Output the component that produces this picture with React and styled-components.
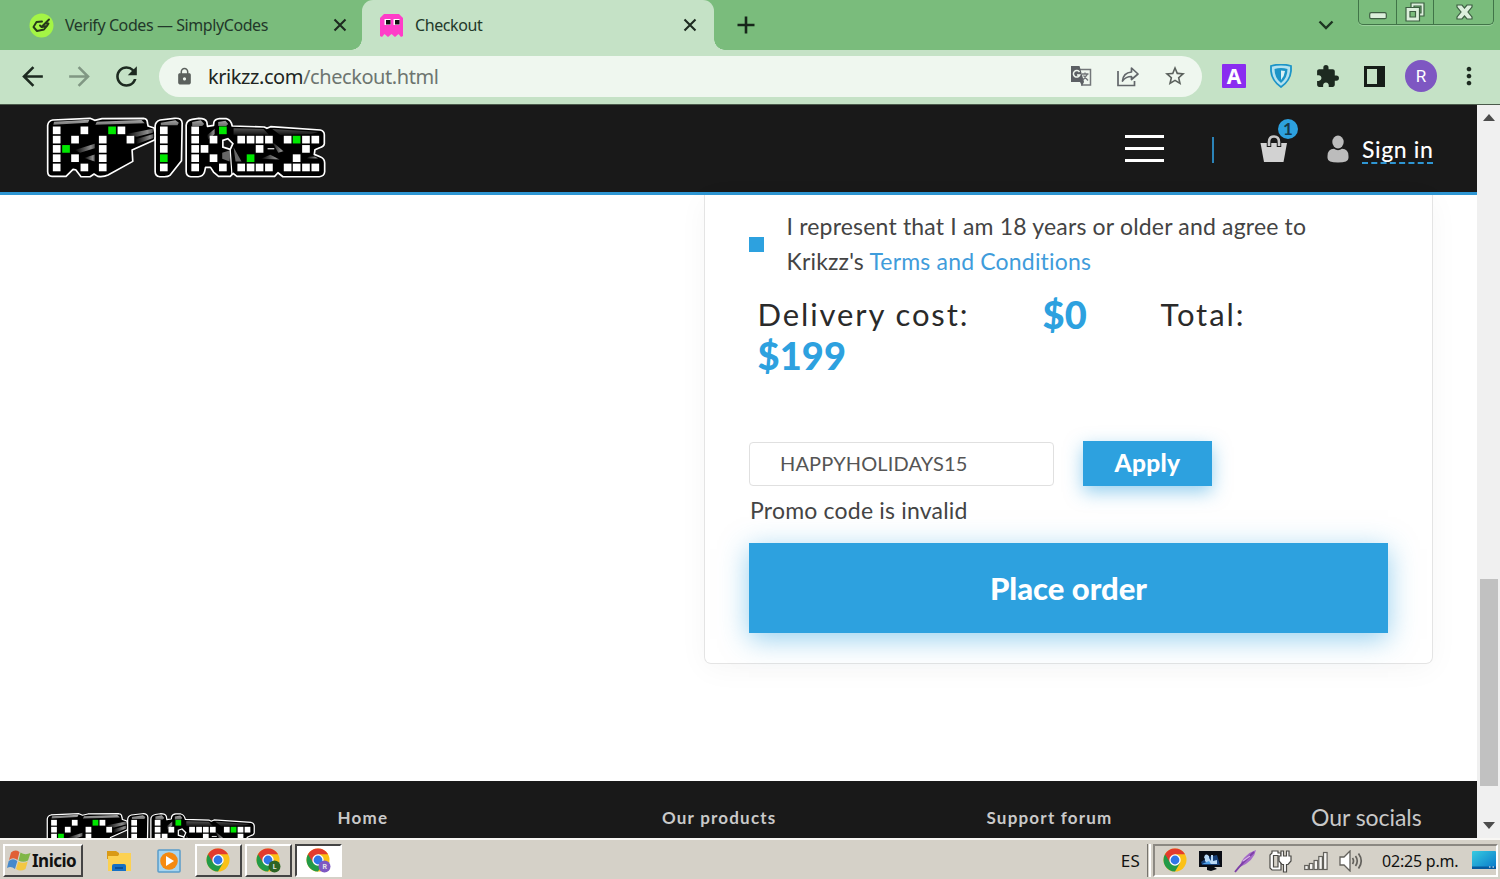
import styled, { createGlobalStyle, css } from "styled-components";
import {
  MdArrowBack,
  MdArrowForward,
  MdRefresh,
  MdLock,
  MdStarBorder,
  MdExtension,
  MdMoreVert,
} from "react-icons/md";

const GlobalStyle = createGlobalStyle`
  * {
    box-sizing: border-box;
  }

  body {
    margin: 0;
    overflow: hidden;
    background: #fff;
    font-family: Lato, sans-serif;
  }

  svg {
    display: block;
    flex: none;
  }
`;

const Screen = styled.div`
  width: 1500px;
  height: 879px;
  display: flex;
  flex-direction: column;
  overflow: hidden;
`;

/* ---------- browser ---------- */

const TabStrip = styled.div`
  height: 50px;
  flex: none;
  display: flex;
  align-items: center;
  background: #7abc7c;
  font-family: "Noto Sans", sans-serif;
`;

const Tab = styled.div`
  position: relative;
  width: ${(p) => p.$width}px;
  height: 50px;
  display: flex;
  align-items: center;
  padding: 0 ${(p) => (p.$active ? 17 : 15)}px 0 ${(p) => (p.$active ? 17 : 29)}px;
  ${(p) =>
    p.$active &&
    css`
      background: #c5e2c6;
      border-radius: 11px 11px 0 0;

      &::before,
      &::after {
        content: "";
        position: absolute;
        bottom: 0;
        width: 11px;
        height: 11px;
      }
      &::before {
        left: -11px;
        background: radial-gradient(circle at 0 0, transparent 10.5px, #c5e2c6 11px);
      }
      &::after {
        right: -11px;
        background: radial-gradient(circle at 100% 0, transparent 10.5px, #c5e2c6 11px);
      }
    `}
`;

const TabTitle = styled.span`
  flex: 1;
  margin-left: 11px;
  color: #22382a;
  font-size: 16px;
  letter-spacing: -0.42px;
  line-height: 24px;
  white-space: nowrap;
`;

const NewTab = styled.div`
  flex: 1;
  padding-left: 23px;
`;

const ListTabs = styled.div`
  margin-right: 24px;
`;

const WindowButtons = styled.div`
  align-self: flex-start;
  display: flex;
  width: 136px;
  height: 25px;
  margin-right: 6px;
  border: 1px solid #417448;
  border-top: 0;
  border-radius: 0 0 5px 5px;
  box-shadow: 0 1px 0 #9bd09c;
`;

const WindowButton = styled.div`
  flex: 0 0 ${(p) => p.$width}px;
  display: flex;
  align-items: center;
  justify-content: center;
  border-left: ${(p) => (p.$first ? 0 : 1)}px solid #417448;
`;

const Toolbar = styled.div`
  height: 55px;
  flex: none;
  display: flex;
  align-items: center;
  padding: 0 15px 2px 17px;
  background: #c5e2c6;
  border-bottom: 1px solid #4b5a4b;
  color: #1d2a20;
`;

const NavButtons = styled.div`
  display: flex;
  gap: 16px;
  margin-right: 17px;

  svg:nth-child(2) {
    color: #809783;
  }
`;

const AddressBar = styled.div`
  width: 1043px;
  height: 41px;
  display: flex;
  align-items: center;
  padding: 0 15px 0 16px;
  border-radius: 21px;
  background: #eff7ef;
  color: #5b615d;
`;

const Url = styled.div`
  flex: 1;
  margin-left: 14px;
  padding-top: 1px;
  color: #6d7570;
  font-family: "Noto Sans", sans-serif;
  font-size: 20px;
  letter-spacing: -0.43px;
  line-height: 28px;

  b {
    color: #202522;
    font-weight: 400;
  }
`;

const AddressActions = styled.div`
  display: flex;
  align-items: center;
  gap: 24px;
`;

const Extensions = styled.div`
  display: flex;
  align-items: center;
  margin-left: 20px;
`;

const LetterBadge = styled.div`
  width: 24px;
  height: 24px;
  margin-right: 24px;
  border-radius: 1px;
  background: #8a2df0;
  color: #fff;
  font: 700 21px/24px "Noto Sans", sans-serif;
  text-align: center;
`;

const PuzzleIcon = styled(MdExtension)`
  margin: 0 24px 0 23px;
`;

const Avatar = styled.div`
  width: 32px;
  height: 32px;
  margin: 0 18px 0 20px;
  border-radius: 50%;
  background: #7e57c2;
  color: #fff;
  font: 400 17px/32px Roboto, sans-serif;
  text-align: center;
`;

/* ---------- page ---------- */

const Viewport = styled.div`
  height: 733px;
  flex: none;
  display: flex;
`;

const Page = styled.div`
  width: 1477px;
  height: 733px;
  display: flex;
  flex-direction: column;
  overflow: hidden;
`;

const SiteHeader = styled.header`
  height: 90px;
  flex: none;
  display: flex;
  align-items: center;
  padding: 0 44px 0 46px;
  background: #191919;
  border-bottom: 3px solid #2e96d3;
`;

const HeaderLogo = styled.div`
  margin-bottom: 2px;
`;

const HeaderRight = styled.div`
  flex: 1;
  display: flex;
  align-items: center;
  justify-content: flex-end;
`;

const Burger = styled.div`
  width: 39px;
  display: grid;
  gap: 9px;

  span {
    height: 3px;
    background: #fff;
  }
`;

const HeaderDivider = styled.div`
  width: 2px;
  height: 26px;
  margin: 2px 46px 0 48px;
  background: #2b83b8;
`;

const Cart = styled.div`
  position: relative;
  width: 28px;
  height: 28px;
  margin-right: 39px;
`;

const CartCount = styled.span`
  position: absolute;
  left: 18px;
  top: -16px;
  width: 20px;
  height: 20px;
  border-radius: 50%;
  background: #2da1df;
  color: #16384b;
  font-size: 17px;
  font-weight: 700;
  line-height: 20px;
  text-align: center;
`;

const SignIn = styled.a`
  width: 71px;
  height: 30px;
  margin: 1px 0 0 13px;
  border-bottom: 2px dashed #2e96d3;
  color: #fff;
  font-size: 23px;
  font-weight: 500;
  letter-spacing: 0.6px;
  line-height: 30px;
  white-space: nowrap;
`;

const Main = styled.main`
  height: 586px;
  flex: none;
  display: flex;
  justify-content: flex-end;
  padding-right: 44px;
  background: #fff;
`;

const OrderCard = styled.section`
  width: 729px;
  height: 469px;
  padding: 14px 44px 0;
  border: 1px solid #e4e4e4;
  border-top: 0;
  border-radius: 0 0 7px 7px;
  box-shadow: 0 5px 30px rgba(0, 0, 0, 0.04);
`;

const Agreement = styled.label`
  display: flex;
  align-items: center;
  height: 70px;
  color: #444;
  font-size: 23px;
  letter-spacing: 0.18px;
  line-height: 35px;

  a {
    color: #3f9cdb;
  }
`;

const Tick = styled.span`
  width: 15px;
  height: 15px;
  margin: 1px 22.5px 0 0;
  background: #2da1df;
`;

const Totals = styled.div`
  display: grid;
  grid-template-columns: 285px 118px 1fr;
  grid-auto-rows: 41px;
  margin: 15px 0 0 8.5px;
  color: #2a2a2a;
  font-size: 31px;
  letter-spacing: 1.9px;
  line-height: 41px;
`;

const Price = styled.strong`
  color: #2da1df;
  font-size: 38px;
  font-weight: 900;
  letter-spacing: 0.1px;
`;

const PromoRow = styled.div`
  display: flex;
  align-items: center;
  gap: 29px;
  height: 45px;
  margin-top: 65px;
`;

const PromoInput = styled.div`
  width: 305px;
  height: 44px;
  padding-left: 30px;
  border: 1px solid #e0e0e0;
  border-radius: 4px;
  color: #555;
  font-size: 20px;
  letter-spacing: 0.15px;
  line-height: 41px;
`;

const Button = styled.div`
  width: ${(p) => (p.$big ? 639 : 129)}px;
  height: ${(p) => (p.$big ? 90 : 45)}px;
  background: #2da1df;
  box-shadow: 0 6px ${(p) => (p.$big ? 26 : 18)}px rgba(45, 161, 223, 0.5);
  color: #fff;
  font-size: ${(p) => (p.$big ? 31 : 24.5)}px;
  font-weight: 900;
  letter-spacing: ${(p) => (p.$big ? 0 : 0.3)}px;
  line-height: ${(p) => (p.$big ? 91 : 44)}px;
  text-align: center;
`;

const PromoError = styled.p`
  height: 57px;
  margin: 0;
  color: #444;
  font-size: 23px;
  letter-spacing: 0.2px;
  line-height: 49px;
  padding-left: 1px;
`;

const Footer = styled.footer`
  height: 57px;
  flex: none;
  display: flex;
  background: #191919;
  padding-left: 46px;
  overflow: hidden;
`;

const FooterLogo = styled.div`
  width: 291.5px;
  padding-top: 31px;
`;

const FooterLink = styled.a`
  width: ${(p) => p.$width}px;
  padding-top: 24px;
  color: #c9c9c9;
  font-size: 17px;
  font-weight: 700;
  letter-spacing: 1.2px;
  line-height: 26px;
  white-space: nowrap;
`;

const Socials = styled(FooterLink)`
  padding-top: 23px;
  font-size: 23px;
  font-weight: 400;
  letter-spacing: -0.05px;
`;

const Scrollbar = styled.div`
  width: 23px;
  display: flex;
  flex-direction: column;
  align-items: center;
  background: #f0f0f0;
  padding: 9px 0 9px 1px;
`;

const Thumb = styled.div`
  width: 18px;
  height: 207px;
  margin: 458px 0 auto;
  background: #c1c1c1;
`;

/* ---------- taskbar ---------- */

const Taskbar = styled.div`
  height: 41px;
  flex: none;
  display: flex;
  align-items: center;
  padding: 2px 2px 0 3px;
  background: #d5d1c8;
  border-top: 2px solid #f8f7f4;
  color: #111;
  font-family: "Noto Sans", sans-serif;
`;

const TaskButton = styled.div`
  width: ${(p) => p.$width || 47}px;
  height: 33px;
  display: flex;
  align-items: center;
  justify-content: center;
  margin-right: 3px;
  background: ${(p) => (p.$pressed ? "#fff" : "#d5d1c8")};
  border: 2px solid;
  border-color: ${(p) => (p.$pressed ? "#444 #fff #fff #444" : "#fff #444 #444 #fff")};
  font-size: 17px;
  font-weight: 700;
  letter-spacing: -0.5px;
`;

const StartButton = styled(TaskButton)`
  justify-content: flex-start;
  padding-left: 2px;
  gap: 1px;
`;

const QuickLaunch = styled.div`
  display: flex;
  gap: 25px;
  margin: 0 13px 0 21px;
`;

const Language = styled.span`
  margin-left: auto;
  font-size: 17px;
  letter-spacing: 0.2px;
`;

const Grip = styled.span`
  width: 4px;
  height: 33px;
  margin: 0 2px 0 7px;
  border-left: 1px solid #77746e;
  border-right: 2px solid #fff;
`;

const Tray = styled.div`
  width: 345px;
  height: 33px;
  display: flex;
  align-items: center;
  gap: 11px;
  padding-left: 8px;
  border: 2px solid;
  border-color: #8b8882 #fff #fff #8b8882;
`;

const Clock = styled.span`
  width: 78px;
  margin: 0 1px 0 8px;
  font-size: 16px;
  letter-spacing: -0.2px;
  white-space: nowrap;
`;

/* ---------- drawings ---------- */

// [column centre, rows, green row]
const LOGO_DOTS = [
  [82, [0, 1, 2, 3, 4]],
  [110, [2], 2],
  [137, [1, 3]],
  [165, [0, 4]],
  [220, [1, 2, 3, 4]],
  [248, [0], 0],
  [276, [0]],
  [303, [1]],
  [403, [0, 1, 2, 3, 4], 3],
  [497, [0, 1, 2, 3, 4]],
  [525, [2]],
  [552, [1, 3]],
  [580, [0, 4], 0],
  [635, [1, 4]],
  [663, [1, 3, 4], 3],
  [690, [1, 2, 4]],
  [718, [1, 4]],
  [774, [1, 4]],
  [801, [1, 3, 4], 1],
  [829, [1, 2, 4]],
  [857, [1, 4]],
];

function Logo({ width, id }) {
  return (
    <svg width={width} height={(width * 190) / 845} viewBox="50 30 845 190">
      <defs>
        <linearGradient id={id} x1="0" y1="0" x2="1" y2="0">
          <stop offset="0" stopColor="#000" />
          <stop offset="0.8" stopColor="#8c8c8c" />
          <stop offset="1" stopColor="#555" />
        </linearGradient>
        <linearGradient id={`${id}Top`} x1="0" y1="0" x2="0" y2="1">
          <stop offset="0" stopColor="#aaa" />
          <stop offset="1" stopColor="#111" />
        </linearGradient>
      </defs>
      <g stroke="#fff" strokeWidth="5" strokeLinejoin="round">
        <path d="M55 58Q57 44 70 42L182 37L196 43L218 38L342 37Q354 38 354 51L356 60L374 66L378 91L375 102L308 132L310 166L236 207Q224 213 205 211L194 204L182 212H155L139 191L131 190L110 211H68Q55 210 55 196Z" />
        <path d="M377 60Q378 46 392 42L435 37Q458 35 458 52L456 164L421 208Q416 212 405 212H391Q377 210 377 196Z" />
        <path d="M470 58Q471 43 488 40L508 37Q528 37 532 48L534 61L552 58L553 49Q556 39 570 38H590Q604 41 608 60L704 63L712 67L723 62L872 72Q884 75 884 86V113Q883 122 870 125L856 131L854 145L873 153Q885 158 885 171V197Q884 210 869 212H760L745 200L735 211H622L611 202L602 211H567L552 198L543 184H528L525 198Q521 211 506 212H484Q470 210 470 196Z" />
      </g>
      <path
        d="M74 47L180 41L176 50L72 56ZM202 47L336 42L346 52L198 56ZM394 50L438 43L448 50L444 58H394ZM488 48L514 43L524 54L518 60H488ZM566 48L588 44L596 54L590 60H566ZM612 67L702 69L718 86H612ZM728 69L866 78L846 84L752 87Z"
        fill={`url(#${id}Top)`}
      />
      <g fill={`url(#${id})`}>
        <path d="M290 84L370 68V80L322 92Z" />
        <path d="M318 100L372 84V96L322 114Z" />
        <path d="M136 132L196 113V127L152 140Z" />
        <path d="M164 156L196 145V166Z" />
        <path d="M532 88L556 68V84L536 100Z" />
        <path d="M694 158L722 146L750 160Z" />
        <path d="M838 152L856 151L866 157H830Z" />
        <path d="M726 106L762 136L746 140Z" />
      </g>
      <path d="M578 140L604 132L600 166L578 158ZM612 124L636 166H618Z" fill="#666" />
      <path d="M580 103L595 98L610 113L602 130L580 123Z" fill="#111" stroke="#fff" strokeWidth="5" />
      <path d="M602 130L607 205" fill="none" stroke="#fff" strokeWidth="3.500" />
      <path d="M714 128H734" stroke="#ddd" strokeWidth="4" />
      {LOGO_DOTS.map(([x, rows, green]) =>
        rows.map((row) => (
          <rect
            key={`${x}-${row}`}
            x={x - 11.5}
            y={73 + row * 27.8 - 11.5}
            width="23"
            height="23"
            fill={row === green ? "#00e800" : "#fff"}
          />
        ))
      )}
    </svg>
  );
}

function CloseIcon() {
  return (
    <svg width="14" height="14" viewBox="0 0 14 14" stroke="#1d2a20" strokeWidth="2.1">
      <path d="M1.5 1.5L12.5 12.5M12.5 1.5L1.5 12.5" />
    </svg>
  );
}

function Ghost() {
  return (
    <svg width="25" height="25" viewBox="0 0 25 25">
      <path d="M5 1H20L24 5V23L22 24L19.500 21L16 24L12.500 21L9 24L5.500 21L3 24L1 23V5Z" fill="#ff3dc8" />
      <path d="M5.500 6H11.500V12H5.500ZM14.500 6H20.500V12H14.500Z" fill="#fff" />
      <path d="M7 7H11.500V11.500H7ZM16 7H20.500V11.500H16Z" fill="#111" />
    </svg>
  );
}

function SimplyCodesIcon() {
  return (
    <svg width="25" height="25" viewBox="0 0 25 25" fill="none" stroke="#26391a" strokeWidth="1.900" strokeLinejoin="round" strokeLinecap="round">
      <circle cx="12.500" cy="12.500" r="12" fill="#a4f545" stroke="none" />
      <path d="M13 8.500L7.500 9L4.500 14L8 18L15 16.500L18 13M11 12.500L12.500 14L20 6.500M13 14L18 13L19.500 10.500L16 10.500" />
    </svg>
  );
}

function TranslateIcon() {
  return (
    <svg width="22" height="22" viewBox="0 0 22 22" fill="none">
      <path d="M9 4.500H20.500V20H11" stroke="#73777a" strokeWidth="1.500" />
      <path d="M1 1H9.500L14 17H1Z" fill="#5c6064" />
      <path d="M9.500 7A3.300 3.300 0 1 0 9.800 10H7" stroke="#eff7ef" strokeWidth="1.500" />
      <path d="M12 9H18.500M15 7.500V9M17.500 9L13 15M13.500 10.500L18 15.500" stroke="#73777a" strokeWidth="1.300" />
      <path d="M10 17L12 21L14 17Z" fill="#5c6064" />
    </svg>
  );
}

function ShareIcon() {
  return (
    <svg width="23" height="21" viewBox="-1 0 23 21" fill="none" stroke="#62666a" strokeWidth="1.700">
      <path d="M1 5V19.500H17.500V15" />
      <path d="M5.500 15C6 9 9 6.500 14.500 6V2L21 8L14.500 13.500V10.500C10.500 10.500 8 11.500 5.500 15Z" strokeLinejoin="round" />
    </svg>
  );
}

function ShieldIcon() {
  return (
    <svg width="22" height="24" viewBox="0 0 22 24">
      <path d="M1 2Q11 -1 21 2V7Q20 17 11 23Q2 17 1 7Z" fill="#b4e2ef" stroke="#1c94c7" strokeWidth="1.800" />
      <path d="M4.500 5Q11 3 17.500 5Q17.500 14 11 19Q4.500 14 4.500 5Z" fill="#1c94c7" />
      <path d="M11 6.500L15 7Q14.500 12 11 16Z" fill="#d9f1f6" />
    </svg>
  );
}

function Chrome({ badge, letter }) {
  return (
    <svg width="25" height="25" viewBox="0 0 25 25">
      <circle cx="12" cy="12" r="11.500" fill="#fbc116" />
      <path d="M2 6.300A11.500 11.500 0 0 0 12 23.500L17 15L12 12V6.300Z" fill="#229a48" />
      <path d="M2 6.300A11.500 11.500 0 0 1 22 6.300H12L7 14.500Z" fill="#e33b2e" />
      <circle cx="12" cy="12" r="5.700" fill="#fff" />
      <circle cx="12" cy="12" r="4.400" fill="#2f76e8" />
      {badge && <circle cx="18.500" cy="18.500" r="6" fill={badge} />}
      {badge && (
        <text x="18.500" y="21.200" fontSize="7" fill="#e4e4e4" textAnchor="middle" fontFamily="Roboto, sans-serif">
          {letter}
        </text>
      )}
    </svg>
  );
}

function WindowsFlag() {
  return (
    <svg width="24" height="22" viewBox="0 0 24 22">
      <path d="M4 2.500Q8 -1 12.500 2L10.500 10Q6 6.500 2 10Z" fill="#e06035" />
      <path d="M13.500 2.500Q18 5.500 23.500 3L21 10.500Q16 13 11.500 10.500Z" fill="#80b648" />
      <path d="M1.700 11Q6 7.500 10.300 11L8 19Q4 15.500 0 18Z" fill="#4689cb" />
      <path d="M11.300 11.500Q15.500 14 20.700 11.500L18.500 19Q13.500 22 9 19Z" fill="#f3c742" />
    </svg>
  );
}

function Folder() {
  return (
    <svg width="25" height="24" viewBox="0 0 25 24">
      <path d="M0 2H9L12 4V10H0Z" fill="#d99a16" />
      <path d="M1 7H11L13 4H24V22H1Z" fill="#fcd152" />
      <path d="M5 22V17Q5 15 7 15H17Q19 15 19 17V22Z" fill="#1670c5" />
      <path d="M8 18H16V20H8Z" fill="#0a4f97" />
    </svg>
  );
}

function MediaPlayer() {
  return (
    <svg width="25" height="24" viewBox="0 0 25 24">
      <rect x="1" y="1" width="22" height="22" rx="1" fill="#a7d5f0" stroke="#5a9cc9" strokeWidth="1.500" />
      <circle cx="12" cy="12" r="8.800" fill="#f58a12" />
      <path d="M9 7L17 12L9 17Z" fill="#fff" />
    </svg>
  );
}

function MonitorIcon() {
  return (
    <svg width="24" height="22" viewBox="0 0 24 22">
      <path d="M0 1H23V17H15L18 19L12 21L8 20V17H0Z" fill="#090c14" />
      <path d="M2 12L9 7L18 5L21 15H3Z" fill="#173f78" />
      <path d="M6 9A2.500 2.500 0 1 1 10 8L12 11V5H14V11L18 10V14H9L6 11Z" fill="#b9d8f5" />
      <path d="M3 14L10 11L12 14Z" fill="#4fa0e8" />
    </svg>
  );
}

function Feather() {
  return (
    <svg width="24" height="24" viewBox="0 0 24 24">
      <path d="M22 1Q20 12 6 18Q7 11 12 7Q16 3 22 1Z" fill="#a56ac9" />
      <path d="M1 23Q8 14 20 3" fill="none" stroke="#7d3fa7" strokeWidth="1.800" />
      <path d="M9 12L16 7" stroke="#d6b1e6" strokeWidth="1.500" />
    </svg>
  );
}

function PlugIcon() {
  return (
    <svg width="24" height="24" viewBox="0 0 24 24" fill="#fff" stroke="#4b4a46" strokeWidth="1.200">
      <path d="M3 4V2H9V4H12V21H3L1 19V6Z" />
      <path d="M4.500 6.500H9V18H4.500Z" fill="#d5d1c8" />
      <path d="M12 7V2H14.500V7H17.500V2H20V7H22V12L19 15.500H17.500V23H14.500V15.500H13L10 12V7Z" />
    </svg>
  );
}

function SignalIcon() {
  return (
    <svg width="24" height="20" viewBox="0 0 24 20" fill="#f7f6f3" stroke="#63615c" strokeWidth="1.200">
      {[4, 6, 9, 13, 17].map((h, i) => (
        <rect key={h} x={0.7 + i * 4.7} y={18.5 - h} width="3.600" height={h} />
      ))}
    </svg>
  );
}

function SpeakerIcon() {
  return (
    <svg width="24" height="22" viewBox="0 0 24 22" fill="none" stroke="#63615c" strokeWidth="1.300">
      <path d="M1 7H5L11 1V21L5 15H1Z" fill="#fff" />
      <path d="M13.500 8Q15.500 11 13.500 14M16.500 6Q20 11 16.500 16M19.500 3.500Q25 11 19.500 18.500" strokeWidth="1.700" />
    </svg>
  );
}

function DesktopIcon() {
  return (
    <svg width="24" height="19" viewBox="0 0 24 19">
      <defs>
        <linearGradient id="desk" x1="0" y1="0" x2="1" y2="1">
          <stop offset="0" stopColor="#37cbe0" />
          <stop offset="1" stopColor="#0877c9" />
        </linearGradient>
      </defs>
      <rect width="24" height="18" rx="1" fill="url(#desk)" />
      <path d="M0 15.500H24V18H0Z" fill="#075a9e" />
      <path d="M17 16H18.500M20.500 16H22" stroke="#fff" />
    </svg>
  );
}

function Browser() {
  return (
    <>
      <TabStrip>
        <Tab $width={362}>
          <SimplyCodesIcon />
          <TabTitle>Verify Codes — SimplyCodes</TabTitle>
          <CloseIcon />
        </Tab>
        <Tab $width={352} $active>
          <Ghost />
          <TabTitle>Checkout</TabTitle>
          <CloseIcon />
        </Tab>
        <NewTab>
          <svg width="18" height="18" viewBox="0 0 18 18" stroke="#17251a" strokeWidth="2.600">
            <path d="M9 0.500V17.500M0.500 9H17.500" />
          </svg>
        </NewTab>
        <ListTabs>
          <svg width="16" height="10" viewBox="0 0 16 10" fill="none" stroke="#1d3522" strokeWidth="2.400">
            <path d="M1.500 1.500L8 8L14.500 1.500" />
          </svg>
        </ListTabs>
        <WindowButtons>
          <WindowButton $width={37} $first>
            <svg width="18" height="23" viewBox="0 0 18 23">
              <rect x="0.700" y="11.700" width="16.600" height="6" rx="1.500" fill="#dcefdc" stroke="#3d5f42" strokeWidth="1.200" />
            </svg>
          </WindowButton>
          <WindowButton $width={37}>
            <svg width="20" height="20" viewBox="0 0 20 20" stroke="#3d5f42" strokeWidth="1.200" fill="#dcefdc">
              <path d="M6 1H19V14H6Z" />
              <path d="M9 4H16V11H9Z" fill="#7abc7c" />
              <path d="M1 5.500H14.500V19H1Z" />
              <path d="M5 9.500H10.500V15H5Z" fill="#7abc7c" />
            </svg>
          </WindowButton>
          <WindowButton $width={61}>
            <svg width="17" height="16" viewBox="0 0 17 16" fill="#dcefdc" stroke="#3d5f42" strokeWidth="1.200">
              <path d="M1 1H6L8.500 4L11 1H16V3L12 8L16 13V15H11L8.500 12L6 15H1V13L5 8L1 3Z" />
            </svg>
          </WindowButton>
        </WindowButtons>
      </TabStrip>
      <Toolbar>
        <NavButtons>
          <MdArrowBack size={31} />
          <MdArrowForward size={31} />
          <MdRefresh size={31} />
        </NavButtons>
        <AddressBar>
          <MdLock size={19} />
          <Url>
            <b>krikzz.com</b>/checkout.html
          </Url>
          <AddressActions>
            <TranslateIcon />
            <ShareIcon />
            <MdStarBorder size={24} />
          </AddressActions>
        </AddressBar>
        <Extensions>
          <LetterBadge>A</LetterBadge>
          <ShieldIcon />
          <PuzzleIcon size={25} />
          <svg width="21" height="21" viewBox="0 0 21 21">
            <path d="M0 0H21V21H0ZM3 3V18H13V3Z" fill="#161d18" fillRule="evenodd" />
          </svg>
          <Avatar>R</Avatar>
          <MdMoreVert size={28} />
        </Extensions>
      </Toolbar>
    </>
  );
}

function Header() {
  return (
    <SiteHeader>
      <HeaderLogo>
        <Logo width={282} id="logoTop" />
      </HeaderLogo>
      <HeaderRight>
        <Burger>
          <span />
          <span />
          <span />
        </Burger>
        <HeaderDivider />
        <Cart>
          <svg width="28" height="28" viewBox="0 0 28 28">
            <path d="M0.500 8H27L23.500 27H4Z" fill="#d2d2d2" />
            <path d="M9 12V7Q9 1.500 14 1.500T19 7V12" fill="none" stroke="#191919" strokeWidth="4.500" />
            <path d="M9 11V7Q9 1.500 14 1.500T19 7V11" fill="none" stroke="#c6c6c6" strokeWidth="2.600" />
          </svg>
          <CartCount>1</CartCount>
        </Cart>
        <svg width="22" height="28" viewBox="0 0 22 28" fill="#bcbcbc">
          <ellipse cx="11" cy="7" rx="5.700" ry="6.500" />
          <path d="M0.500 21Q0.500 14 7 13.800Q11 16.500 15 13.800Q21.500 14 21.500 21V23Q21.500 27.500 11 27.500T0.500 23Z" />
        </svg>
        <SignIn>Sign in</SignIn>
      </HeaderRight>
    </SiteHeader>
  );
}

function Checkout() {
  return (
    <Main>
      <OrderCard>
        <Agreement>
          <Tick />
          <span>
            I represent that I am 18 years or older and agree to
            <br />
            Krikzz's <a>Terms and Conditions</a>
          </span>
        </Agreement>
        <Totals>
          <span>Delivery cost:</span>
          <Price>$0</Price>
          <span>Total:</span>
          <Price>$199</Price>
        </Totals>
        <PromoRow>
          <PromoInput>HAPPYHOLIDAYS15</PromoInput>
          <Button>Apply</Button>
        </PromoRow>
        <PromoError>Promo code is invalid</PromoError>
        <Button $big>Place order</Button>
      </OrderCard>
    </Main>
  );
}

export default function App() {
  return (
    <Screen>
      <GlobalStyle />
      <Browser />
      <Viewport>
        <Page>
          <Header />
          <Checkout />
          <Footer>
            <FooterLogo>
              <Logo width={211} id="logoBottom" />
            </FooterLogo>
            <FooterLink $width={324.5}>Home</FooterLink>
            <FooterLink $width={324.5}>Our products</FooterLink>
            <FooterLink $width={324.5}>Support forum</FooterLink>
            <Socials $width={120}>Our socials</Socials>
          </Footer>
        </Page>
        <Scrollbar>
          <svg width="12" height="7" viewBox="0 0 12 7">
            <path d="M0 7L6 0L12 7Z" fill="#4c4c4c" />
          </svg>
          <Thumb />
          <svg width="12" height="7" viewBox="0 0 12 7">
            <path d="M0 0L6 7L12 0Z" fill="#4c4c4c" />
          </svg>
        </Scrollbar>
      </Viewport>
      <Taskbar>
        <StartButton $width={80}>
          <WindowsFlag />
          Inicio
        </StartButton>
        <QuickLaunch>
          <Folder />
          <MediaPlayer />
        </QuickLaunch>
        <TaskButton>
          <Chrome />
        </TaskButton>
        <TaskButton>
          <Chrome badge="#2c6424" letter="L" />
        </TaskButton>
        <TaskButton $pressed>
          <Chrome badge="#7e57c2" letter="R" />
        </TaskButton>
        <Language>ES</Language>
        <Grip />
        <Tray>
          <Chrome />
          <MonitorIcon />
          <Feather />
          <PlugIcon />
          <SignalIcon />
          <SpeakerIcon />
          <Clock>02:25 p.m.</Clock>
          <DesktopIcon />
        </Tray>
      </Taskbar>
    </Screen>
  );
}
